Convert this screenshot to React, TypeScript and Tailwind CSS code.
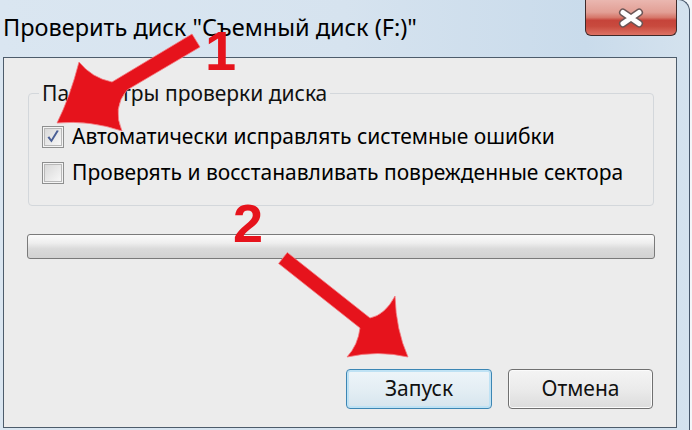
import React from "react";

function CheckBox({ checked }: { checked?: boolean }) {
  return (
    <div className="flex h-[22px] w-[22px] shrink-0 items-center justify-center border border-[#8e8f8f] bg-[#f4f4f4]">
      <div className="flex h-[18px] w-[18px] items-center justify-center border border-[#b8b8b8] bg-gradient-to-br from-[#d9d9d9] to-[#f7f7f7]">
        {checked && (
          <svg width="16" height="16" viewBox="0 0 16 16">
            <path
              d="M2.5 8.5 L6.5 13.5 L13.8 1.8 L11.8 1.2 L6.3 10.2 L4.2 7.2 Z"
              fill="#4a5f95"
            />
          </svg>
        )}
      </div>
    </div>
  );
}

function CloseButton() {
  return (
    <div className="mr-[12px] ml-auto flex h-[36px] w-[92px] items-center justify-center rounded-b-[6px] border border-t-0 border-[#3f2a2a] bg-[linear-gradient(180deg,#eab7b0_0%,#e29f95_35%,#d6776a_50%,#c6443a_58%,#c84a3e_75%,#dd7264_100%)]">
      <svg width="30" height="22" viewBox="-15 -11 30 22">
        <g strokeLinecap="round">
          <path d="M-8 -5.5 L8 5.5 M8 -5.5 L-8 5.5" stroke="#6b5656" strokeWidth="8" />
          <path d="M-8 -5.5 L8 5.5 M8 -5.5 L-8 5.5" stroke="#ffffff" strokeWidth="5" />
        </g>
      </svg>
    </div>
  );
}

function Arrows() {
  return (
    <svg
      className="pointer-events-none absolute inset-0"
      width="692"
      height="430"
      viewBox="0 0 692 430"
    >
      <g fill="#e6131c" stroke="#f47a7f" strokeWidth="0.8" strokeLinejoin="round">
        <path d="M192 34 L112 82 Q92 78 79 62 Q70 97 57 123 Q90 120 122 131 Q112 108 127 90 L200 47 Z" />
        <path d="M287.3 252.5 L370 318 Q385 315 395 296 Q396 330 408 357 Q378 350 347 357 Q358 345 360 328 L278.6 263.5 Z" />
      </g>
    </svg>
  );
}

export default function App() {
  return (
    <div className="relative h-[430px] w-[692px] overflow-hidden bg-[#f3f6f9] font-['Noto_Sans','DejaVu_Sans',sans-serif] text-black">
      <div className="-mt-px flex h-[431px] w-[690px] flex-col rounded-tr-[12px] border-t border-r border-[#46566a] bg-[linear-gradient(90deg,#dae6f1_0%,#d6e3ef_50%,#c9dbeb_85%,#d4e2ee_100%)]">
        {/* title bar */}
        <div className="flex h-[57px] shrink-0 items-start">
          <div className="pt-[12px] pl-[3px] text-[23.5px] leading-[30px] whitespace-nowrap">
            {'Проверить диск "Съемный диск (F:)"'}
          </div>
          <CloseButton />
        </div>

        {/* client area */}
        <div className="ml-[3px] flex h-[371px] w-[674px] flex-col border border-[#4d5c6b] bg-[#ececec] text-[21px]">
          <fieldset className="mt-[23px] ml-[24px] h-[125px] w-[626px] rounded-[4px] border border-[#d3d7db]">
            <legend className="ml-[10px] px-[3px] leading-[24px] text-[#111]">
              Параметры проверки диска
            </legend>
            <div className="mt-[21px] flex flex-col gap-[14px] pl-[13px]">
              <label className="flex h-[22px] items-center gap-[8px] whitespace-nowrap">
                <CheckBox checked />
                <span>Автоматически исправлять системные ошибки</span>
              </label>
              <label className="flex h-[22px] items-center gap-[8px] whitespace-nowrap">
                <CheckBox />
                <span>Проверять и восстанавливать поврежденные сектора</span>
              </label>
            </div>
          </fieldset>

          <div className="mt-[28px] ml-[23px] h-[25px] w-[628px] rounded-[3px] border border-[#7a7a7a] bg-[linear-gradient(180deg,#fbfbfb_0%,#eeeeee_35%,#dadada_60%,#d2d2d2_100%)]" />

          <div className="mt-[110px] flex justify-end gap-[16px] pr-[23px]">
            <button className="h-[40px] w-[146px] rounded-[4px] border border-[#3c86b4] bg-[linear-gradient(180deg,#eef5f9_0%,#e4eef4_50%,#d6e5ee_100%)] text-[21px] text-[#111] shadow-[inset_0_0_0_2px_#bfe2f4]">
              Запуск
            </button>
            <button className="h-[40px] w-[145px] rounded-[4px] border border-[#707070] bg-[linear-gradient(180deg,#f4f4f4_0%,#ebebeb_50%,#dcdcdc_100%)] text-[21px] text-[#111] shadow-[inset_0_0_0_1px_#fbfbfb]">
              Отмена
            </button>
          </div>
        </div>
      </div>

      <Arrows />
      <div className="absolute top-[23px] left-[205px] font-['Liberation_Sans',sans-serif] text-[56px] leading-none font-bold text-[#e6131c]">
        1
      </div>
      <div className="absolute top-[196px] left-[233px] font-['Liberation_Sans',sans-serif] text-[54px] leading-none font-bold text-[#e6131c]">
        2
      </div>
    </div>
  );
}
